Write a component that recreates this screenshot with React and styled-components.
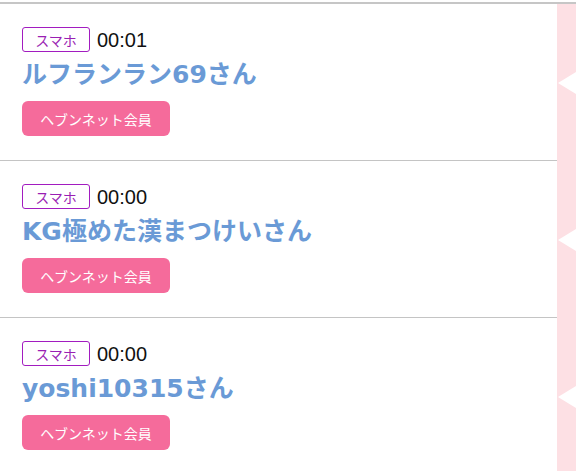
import React from 'react'
import styled, { createGlobalStyle } from 'styled-components'

const members = [
  { id: 1, time: '00:01', name: 'ルフランラン69さん' },
  { id: 2, time: '00:00', name: 'KG極めた漢まつけいさん' },
  { id: 3, time: '00:00', name: 'yoshi10315さん' },
]

const App = () => (
  <>
    <GlobalStyle />
    <List>
      {members.map(m => (
        <Row key={m.id}>
          <Entry>
            <Meta>
              <DeviceTag>スマホ</DeviceTag>
              <Time>{m.time}</Time>
            </Meta>
            <Name>{m.name}</Name>
            <MemberButton>ヘブンネット会員</MemberButton>
          </Entry>
          <Side>
            <Notch />
          </Side>
        </Row>
      ))}
    </List>
  </>
)

export default App

// #region styles
const GlobalStyle = createGlobalStyle`
  body {
    margin: 0;
    background: #fff;
    font-family: 'Noto Sans CJK JP', 'Noto Sans', sans-serif;
  }
`

const List = styled.div`
  margin-top: 2px;
  border-top: 2px solid #c6c6c6;
  display: flex;
  flex-direction: column;
`

const Row = styled.div`
  display: flex;
  align-items: stretch;
`

const Entry = styled.div`
  flex: 1;
  display: flex;
  flex-direction: column;
  align-items: flex-start;
  padding: 23px 22px 24px;
  border-bottom: 1px solid #c4c4c4;
`

const Meta = styled.div`
  display: flex;
  align-items: center;
  gap: 7px;
  height: 25px;
`

const DeviceTag = styled.span`
  box-sizing: border-box;
  width: 68px;
  height: 25px;
  display: flex;
  align-items: center;
  justify-content: center;
  border: 1px solid #a21cc0;
  border-radius: 3px;
  color: #9a1fb3;
  font-size: 14px;
  line-height: 1;
`

const Time = styled.span`
  font-family: 'Liberation Sans', sans-serif;
  font-size: 20px;
  color: #111;
  line-height: 1;
`

const Name = styled.div`
  margin-top: 6px;
  font-family: 'DejaVu Sans', 'Noto Sans CJK JP', sans-serif;
  font-size: 25px;
  font-weight: 700;
  color: #6a9ad6;
  line-height: 34px;
`

const MemberButton = styled.div`
  margin-top: 9px;
  width: 148px;
  height: 35px;
  display: flex;
  align-items: center;
  justify-content: center;
  background: #f56b9b;
  border-radius: 6px;
  color: #fff;
  font-size: 14px;
`

const Side = styled.div`
  width: 19px;
  background: #fde0e4;
  display: flex;
  align-items: center;
  justify-content: flex-end;
`

const Notch = styled.div`
  width: 0;
  height: 0;
  border-top: 11px solid transparent;
  border-bottom: 11px solid transparent;
  border-right: 18px solid #fff;
`
// #endregion
